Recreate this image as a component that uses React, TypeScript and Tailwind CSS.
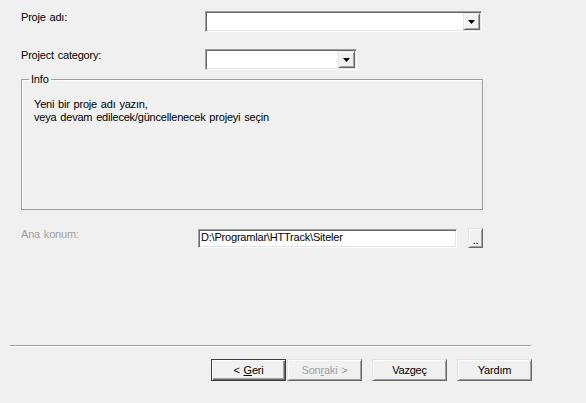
const sunken =
  'border border-t-[#a0a0a0] border-l-[#a0a0a0] border-r-white border-b-white shadow-[inset_1px_1px_0_#696969,inset_-1px_-1px_0_#e3e3e3] bg-white'

const raised =
  'border border-t-[#e3e3e3] border-l-[#e3e3e3] border-r-[#696969] border-b-[#696969] shadow-[inset_1px_1px_0_#fff,inset_-1px_-1px_0_#a0a0a0] bg-[#f0f0f0]'

function Arrow() {
  return (
    <svg width="7" height="4" viewBox="0 0 7 4">
      <path d="M0 0h7L3.5 4z" fill="#000" />
    </svg>
  )
}

function Combo({ width }: { width: string }) {
  return (
    <div className={`${sunken} ${width} h-[21px] flex justify-end p-px`}>
      <div className={`${raised} w-[17px] h-[17px] flex items-center justify-center`}>
        <Arrow />
      </div>
    </div>
  )
}

function Button({ children, primary, disabled }: { children: React.ReactNode; primary?: boolean; disabled?: boolean }) {
  const frame = primary
    ? 'border border-[#3c3c3c] shadow-[inset_1px_1px_0_#fff,inset_-1px_-1px_0_#696969,inset_-2px_-2px_0_#a0a0a0] bg-[#f0f0f0]'
    : raised
  return (
    <div
      className={`${frame} w-[75px] h-[22px] flex items-center justify-center ${disabled ? 'text-[#a0a0a0]' : 'text-black'}`}
    >
      <span>{children}</span>
    </div>
  )
}

export default function App() {
  return (
    <div className="w-[586px] h-[403px] bg-[#f0f0f0] flex flex-col text-[11px] leading-[13px] text-black tracking-[-0.2px] [word-spacing:1px] font-['Liberation_Sans',Arial,sans-serif] overflow-hidden">
      <div className="mt-[11px] flex items-start">
        <label className="w-[205px] pl-[21px]">Proje adı:</label>
        <Combo width="w-[277px]" />
      </div>

      <div className="mt-[17px] flex items-start">
        <label className="w-[205px] pl-[21px]">Project category:</label>
        <Combo width="w-[152px]" />
      </div>

      <fieldset className="mt-[3px] ml-[21px] w-[462px] h-[137px] border border-[#a0a0a0] shadow-[inset_1px_1px_0_#fff] pl-[7px]">
        <legend className="px-[2px]">Info</legend>
        <div className="mt-[12px] ml-[5px]">
          <p>Yeni bir proje adı yazın,</p>
          <p>veya devam edilecek/güncellenecek projeyi seçin</p>
        </div>
      </fieldset>

      <div className="mt-[19px] flex items-start">
        <label className="w-[198px] pl-[21px] mt-[-1px] text-[#a0a0a0]">Ana konum:</label>
        <div className={`${sunken} w-[259px] h-[19px] pl-[2px] pt-px whitespace-nowrap`}>D:\Programlar\HTTrack\Siteler</div>
        <div className={`${raised} ml-[11px] -mt-px w-[15px] h-[20px] flex items-end justify-center pb-[2px]`}>
          <span className="leading-[9px]">..</span>
        </div>
      </div>

      <div className="mt-[97px] ml-[10px] w-[521px] border-t border-t-[#a0a0a0] border-b border-b-white" />

      <div className="mt-[12px] pl-[211px] flex">
        <Button primary>
          &lt; <u>G</u>eri
        </Button>
        <div className="ml-px">
          <Button disabled>
            Son<u>r</u>aki &gt;
          </Button>
        </div>
        <div className="ml-[10px]">
          <Button>Vazgeç</Button>
        </div>
        <div className="ml-[10px]">
          <Button>Yardım</Button>
        </div>
      </div>
    </div>
  )
}
